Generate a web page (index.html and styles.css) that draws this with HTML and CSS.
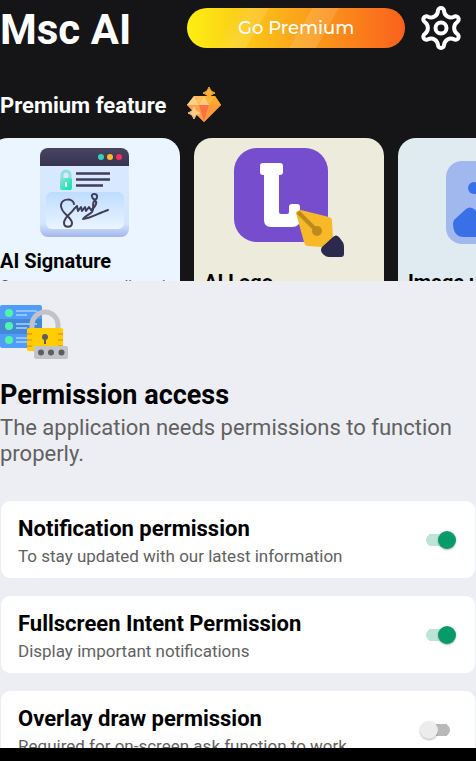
FILE: index.html
```html
<!DOCTYPE html>
<html lang="en">
<head>
    <meta charset="UTF-8">
    <meta name="viewport" content="width=device-width, initial-scale=1">
    <title>Msc AI</title>
    <link rel="stylesheet" href="styles.css">
</head>
<body>
<section class="home">
    <header class="topbar">
        <h1>Msc AI</h1>
        <button class="premium">Go Premium</button>
        <button class="settings" aria-label="Settings">
            <svg width="44" height="44" viewBox="-22 -22 44 44" fill="none" stroke="#fff" stroke-width="4" stroke-linejoin="round">
                <path d="M-3-17A3 3 0 0 1 3-17C3.500-12 8.6-9 13-11.3A3 3 0 0 1 16.200-6C12.1-3 12.1 3 16.200 6A3 3 0 0 1 13 11.3C8.6 9 3.500 12 3 17A3 3 0 0 1-3 17C-3.500 12-8.6 9-13 11.3A3 3 0 0 1-16.200 6C-12.1 3-12.1-3-16.200-6A3 3 0 0 1-13-11.3C-8.6-9-3.500-12-3-17Z"/>
                <circle r="5.5"/>
            </svg>
        </button>
    </header>

    <div class="section-title">
        <h2>Premium feature</h2>
        <svg width="36" height="36" viewBox="0 0 36 36">
            <path fill="#ffb43c" d="M8 9h21l6 9-17 17L1 18z"/>
            <path fill="#ffd08a" d="M8 9l5 9H1z"/>
            <path fill="#ffbd5c" d="M8 9h10l-5 9z"/>
            <path fill="#ffcf80" d="M18 9l5 9H13z"/>
            <path fill="#ffa726" d="M29 9l6 9H23z"/>
            <path fill="#ffa04a" d="M1 18h12l5 17z"/>
            <path fill="#ff7043" d="M13 18h10l-5 17z"/>
            <path fill="#ff9a3c" d="M23 18h12L18 35z"/>
            <path fill="#ffb02e" d="M23 0q1 5 6 6-5 1-6 6-1-5-6-6 5-1 6-6z" stroke="#ffb02e" stroke-width="1"/>
            <path fill="#ffc98a" d="M8 20q1 5 6 6-5 1-6 6-1-5-6-6 5-1 6-6z" stroke="#ffc98a" stroke-width="1"/>
        </svg>
    </div>

    <div class="features">
        <article class="feature signature">
            <svg width="90" height="89" viewBox="0 0 90 89">
                <defs>
                    <linearGradient id="page" x1="0" y1="0" x2="0" y2="1">
                        <stop offset="0" stop-color="#dceaff"/>
                        <stop offset=".85" stop-color="#d3e6ff"/>
                        <stop offset="1" stop-color="#a3b5ea"/>
                    </linearGradient>
                    <linearGradient id="pad" x1="0" y1="0" x2="0" y2="1">
                        <stop offset="0" stop-color="#bedcff"/>
                        <stop offset="1" stop-color="#ebf4ff"/>
                    </linearGradient>
                    <linearGradient id="bar" x1="0" y1="0" x2="0" y2="1">
                        <stop offset="0" stop-color="#484460"/>
                        <stop offset="1" stop-color="#373453"/>
                    </linearGradient>
                    <linearGradient id="lock" x1="0" y1="0" x2="1" y2="1">
                        <stop offset="0" stop-color="#8fe0dc"/>
                        <stop offset="1" stop-color="#00e5a0"/>
                    </linearGradient>
                </defs>
                <rect width="89" height="89" rx="8" fill="url(#page)"/>
                <path fill="url(#bar)" d="M0 18V8a8 8 0 0 1 8-8h73a8 8 0 0 1 8 8v10z"/>
                <circle cx="61" cy="9" r="3" fill="#36d3b5"/>
                <circle cx="70" cy="9" r="3" fill="#fcb92c"/>
                <circle cx="79" cy="9" r="3" fill="#ff2d5f"/>
                <path fill="none" stroke="#8fdfda" stroke-width="3" d="M22 31v-4a4 4 0 0 1 8 0v4"/>
                <rect x="20" y="30" width="12" height="12" rx="2" fill="url(#lock)"/>
                <path stroke="#fff" stroke-width="2" stroke-linecap="round" d="M26 35v3"/>
                <path stroke="#403d5a" stroke-width="2.4" d="M36 25.500h34M36 31.500h34M36 37.500h27"/>
                <rect x="6" y="44" width="78" height="37" rx="6" fill="url(#pad)"/>
                <path fill="none" stroke="#403d5a" stroke-width="2" stroke-linecap="round" stroke-linejoin="round" d="M34 56c-1-6-12-6-13 1-1 8 11 12 11 18 0 5-8 5-8 0 0-6 7-9 10-14l3-3 1 5 3-4 1 4 3-4 1 4 3-4 2 3c6-4 6-8 4-10-4-2-4-6-1-6 4 0 4 4 1 6-4 3 0 8-3 12-3 3-7 4-9 7 6 0 16-6 25-9"/>
            </svg>
            <h3>AI Signature</h3>
            <p>Create your own edit and</p>
        </article>
        <article class="feature logo">
            <svg width="110" height="110" viewBox="0 0 110 110">
                <rect width="94" height="94" rx="23" fill="#754dcd"/>
                <path fill="#fff" d="M29 15h17q3 0 3 3v6q0 3-3 3h-1v37q0 2 2 2h6q2 0 2-2v-5q0-3 3-3h5q3 0 3 3v12q0 8-8 8H37q-7 0-7-7V27h-1q-3 0-3-3v-6q0-3 3-3z"/>
                <path fill="#f7b928" d="M62 65q1-3 5-3l28 7q3 1 3 4l1 18-10 8-15-1q-3 0-4-4z"/>
                <path stroke="#bd8a20" stroke-width="4" d="M64 64l19 19"/>
                <circle cx="83" cy="83" r="5" fill="#bd8a20"/>
                <path fill="#2b2a4c" d="M99 89q3-3 6 0l3 4q2 2 2 5v8q0 3-3 3H95q-3 0-5-2l-2-2q-2-3 0-6z"/>
            </svg>
            <h3>AI Logo</h3>
        </article>
        <article class="feature image">
            <svg width="110" height="110" viewBox="0 0 110 110">
                <rect x="8" y="13" width="94" height="83" rx="16" fill="#a0b8ee"/>
                <circle cx="36" cy="40" r="6" fill="#3970e8"/>
                <path fill="#3970e8" d="M16 72l12-11q4-3 8 0l9 8 18-18q4-3 8 0l24 22v3q0 13-11 13H26q-11 0-11-14z"/>
            </svg>
            <h3>Image upscale</h3>
        </article>
    </div>
</section>

<main class="sheet">
    <svg class="sheet-icon" width="68" height="54" viewBox="0 0 68 54">
        <rect width="42" height="43" rx="2" fill="#4f9df9"/>
        <path fill="#4488d8" d="M0 14h42v15H0z"/>
        <g fill="#50f5ac">
            <circle cx="9" cy="8" r="4"/>
            <circle cx="9" cy="21" r="4"/>
            <circle cx="9" cy="35" r="4"/>
        </g>
        <path stroke="#a9d0ff" stroke-width="1.500" d="M16 6h21M16 10h11M16 19h21M16 23h11M16 33h21M16 37h11"/>
        <path fill="none" stroke="#c3c2c8" stroke-width="5" d="M32 25v-5a13 13 0 0 1 26 0v5"/>
        <rect x="27" y="23" width="36" height="23" rx="2" fill="#ffcd00"/>
        <path stroke="#ffa000" stroke-width="2" d="M27 29h5M27 35h5M27 41h5M58 29h5M58 35h5M58 41h5"/>
        <circle cx="45" cy="32" r="3" fill="#5b5d5f"/>
        <path stroke="#5b5d5f" stroke-width="2" d="M45 32v7"/>
        <rect x="34" y="41" width="34" height="13" rx="2" fill="#c3c2c8"/>
        <g fill="#5b5d5f">
            <circle cx="41" cy="47.500" r="3"/>
            <circle cx="51" cy="47.500" r="3"/>
            <circle cx="61.500" cy="47.500" r="3"/>
        </g>
    </svg>
    <h2>Permission access</h2>
    <p class="intro">The application needs permissions to function properly.</p>

    <div class="permissions">
        <div class="permission">
            <label for="notification">
                <strong>Notification permission</strong>
                <span>To stay updated with our latest information</span>
            </label>
            <input type="checkbox" id="notification" checked>
        </div>
        <div class="permission">
            <label for="fullscreen">
                <strong>Fullscreen Intent Permission</strong>
                <span>Display important notifications</span>
            </label>
            <input type="checkbox" id="fullscreen" checked>
        </div>
        <div class="permission">
            <label for="overlay">
                <strong>Overlay draw permission</strong>
                <span>Required for on-screen ask function to work</span>
            </label>
            <input type="checkbox" id="overlay">
        </div>
    </div>
</main>
<footer class="navbar"></footer>
</body>
</html>
```
FILE: styles.css
```css
* {
    box-sizing: border-box;
}

body {
    margin: 0;
    height: 100vh;
    display: flex;
    flex-direction: column;
    overflow: hidden;
    font-family: Roboto, "Liberation Sans", sans-serif;
    color: #000;
    background: #151517;
}

h1, h2, h3, p {
    margin: 0;
}

.home {
    flex: 3;
    min-height: 0;
    overflow: hidden;
    color: white;
}

.topbar {
    display: flex;
    align-items: center;
    padding: 6px 13px 0 0;
}

.topbar h1 {
    flex: 1;
    padding-top: 3px;
    font-size: 42px;
    line-height: 41px;
}

.premium {
    width: 47%;
    height: 40px;
    border: none;
    border-radius: 20px;
    background:
        linear-gradient(120deg, transparent 20%, rgba(255, 255, 255, 0.12) 28%, rgba(255, 255, 255, 0.12) 34%, transparent 34%, transparent 52%, rgba(255, 255, 255, 0.12) 52%, rgba(255, 255, 255, 0.12) 63%, transparent 63%),
        linear-gradient(90deg, #fcf012, #fba61b 50%, #fa611c);
    color: white;
    font-family: Montserrat, Inter, sans-serif;
    font-size: 18px;
    font-weight: 500;
}

.settings {
    display: flex;
    margin-left: 14px;
    padding: 0;
    border: none;
    background: none;
}

.section-title {
    display: flex;
    align-items: center;
    gap: 20px;
    padding: 37px 0 15px;
}

.section-title h2 {
    font-size: 22px;
}

.features {
    display: flex;
    gap: 14px;
    margin-left: -10px;
}

.feature {
    flex: none;
    width: 190px;
    height: 190px;
    padding: 10px;
    border-radius: 18px;
    color: black;
}

.feature svg {
    display: block;
    margin: 0 auto;
}

.feature h3 {
    margin-top: 12px;
    font-size: 20px;
    line-height: 24px;
}

.feature p {
    margin-top: 4px;
    font-size: 15px;
    line-height: 18px;
    color: #5c5c5c;
}

.signature {
    background: #eaf5ff;
}

.logo {
    background: #ecebdc;
}

.image {
    background: #e0ebf1;
}

.sheet {
    flex: 5;
    min-height: 0;
    overflow: hidden;
    background: #edeef3;
}

.sheet-icon {
    display: block;
    margin-top: 24px;
}

.sheet h2 {
    margin-top: 20px;
    font-size: 27px;
    line-height: 32px;
}

.intro {
    margin-top: 4px;
    font-size: 22px;
    line-height: 26px;
    color: #616161;
}

.permissions {
    display: flex;
    flex-direction: column;
    gap: 18px;
    padding: 34px 1px 0;
}

.permission {
    display: flex;
    align-items: center;
    justify-content: space-between;
    padding: 12px 19px 11px 17px;
    border-radius: 9px;
    background: white;
}

.permission strong {
    display: block;
    font-size: 22px;
    line-height: 32px;
}

.permission span {
    display: block;
    font-size: 17px;
    line-height: 22px;
    color: #616161;
}

.permission input {
    appearance: none;
    flex: none;
    display: flex;
    align-items: center;
    width: 36px;
    height: 18px;
    margin: 0;
    background: linear-gradient(#b9b9b9, #b9b9b9) center / 18px 12px no-repeat;
}

.permission input::before {
    content: "";
    width: 18px;
    height: 18px;
    border-radius: 50%;
    background: #ececec;
    box-shadow: 0 1px 2px rgba(0, 0, 0, 0.3);
}

.permission input::after {
    content: "";
    width: 12px;
    height: 12px;
    border-radius: 0 6px 6px 0;
    background: #b9b9b9;
}

.permission input:checked {
    flex-direction: row-reverse;
    background: linear-gradient(#bce5d7, #bce5d7) center / 18px 12px no-repeat;
}

.permission input:checked::before {
    background: #089b6a;
}

.permission input:checked::after {
    border-radius: 6px 0 0 6px;
    background: #bce5d7;
}

.navbar {
    flex: none;
    height: 13px;
    background: black;
}
```
